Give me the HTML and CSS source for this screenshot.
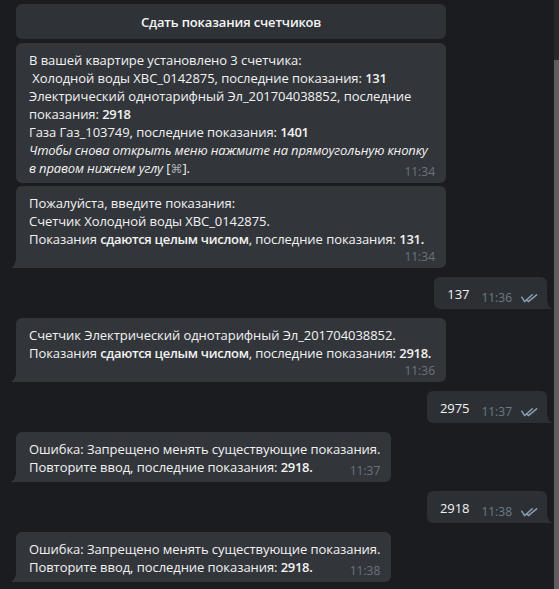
FILE: index.html
```html
<!DOCTYPE html>
<html lang="ru">
<head>
<meta charset="utf-8">
<title>Chat</title>
<link rel="stylesheet" href="styles.css">
</head>
<body>
<div class="chat">
  <div class="group">
    <div class="kb-btn">Сдать показания счетчиков</div>
    <div class="bubble in wide">В вашей квартире установлено 3 счетчика:<br>&nbsp;Холодной воды ХВС_0142875, последние показания: <b>131</b><br>Электрический однотарифный Эл_201704038852, последние показания: <b>2918</b><br>Газа Газ_103749, последние показания: <b>1401</b><br><i>Чтобы снова открыть меню нажмите на прямоугольную кнопку<br>в правом нижнем углу</i> [<span class="cmd">⌘</span>].<span class="meta">11:34</span></div>
    <div class="bubble in wide tail-in">Пожалуйста, введите показания:<br>Счетчик Холодной воды ХВС_0142875.<br>Показания <b>сдаются целым числом</b>, последние показания: <b>131.</b><div class="foot">11:34</div></div>
  </div>
  <div class="group">
    <div class="bubble out tail-out">137<span class="meta out-meta">11:36<svg class="checks" width="18" height="9" viewBox="0 0 18 9"><path d="M0.8 3.2 L3.6 7.6 L11.2 0.8 M6 6 L7.4 7.6 L15.6 0.8" /></svg></span></div>
  </div>
  <div class="group">
    <div class="bubble in wide tail-in">Счетчик Электрический однотарифный Эл_201704038852.<br>Показания <b>сдаются целым числом</b>, последние показания: <b>2918.</b><div class="foot">11:36</div></div>
  </div>
  <div class="group">
    <div class="bubble out tail-out">2975<span class="meta out-meta">11:37<svg class="checks" width="18" height="9" viewBox="0 0 18 9"><path d="M0.8 3.2 L3.6 7.6 L11.2 0.8 M6 6 L7.4 7.6 L15.6 0.8" /></svg></span></div>
  </div>
  <div class="group">
    <div class="bubble in tail-in">Ошибка: Запрещено менять существующие показания.<br>Повторите ввод, последние показания: <b>2918.</b><span class="meta">11:37</span></div>
  </div>
  <div class="group">
    <div class="bubble out tail-out">2918<span class="meta out-meta">11:38<svg class="checks" width="18" height="9" viewBox="0 0 18 9"><path d="M0.8 3.2 L3.6 7.6 L11.2 0.8 M6 6 L7.4 7.6 L15.6 0.8" /></svg></span></div>
  </div>
  <div class="group">
    <div class="bubble in tail-in">Ошибка: Запрещено менять существующие показания.<br>Повторите ввод, последние показания: <b>2918.</b><span class="meta">11:38</span></div>
  </div>
</div>
<div class="scrollbar"><div class="thumb"></div></div>
</body>
</html>
```
FILE: styles.css
```css
html, body {
  margin: 0;
  height: 100%;
}
body {
  background: #1b1c20;
  font-family: "Open Sans", "DejaVu Sans", sans-serif;
  font-size: 13px;
  color: #f2f2f2;
  display: flex;
  overflow: hidden;
}
.chat {
  flex: 1;
  display: flex;
  flex-direction: column;
  gap: 9px;
  padding: 4px 7px 0 16px;
  min-width: 0;
}
.group {
  display: flex;
  flex-direction: column;
  gap: 3px;
}
.kb-btn {
  width: 430px;
  height: 35px;
  box-sizing: border-box;
  background: #2f3237;
  border-radius: 6px;
  font-family: "Open Sans SemiBold", "Open Sans Semibold", "Open Sans", sans-serif;
  font-weight: 600;
  letter-spacing: -0.15px;
  display: flex;
  align-items: center;
  justify-content: center;
  margin-bottom: 1px;
  color: #f5f5f5;
}
.bubble {
  position: relative;
  display: flow-root;
  box-sizing: border-box;
  max-width: 430px;
  background: #32363b;
  border-radius: 6px;
  padding: 8px 11px 4px 13px;
  line-height: 18px;
  letter-spacing: -0.06px;
}
.bubble b {
  font-family: "Open Sans SemiBold", "Open Sans Semibold", "Open Sans", sans-serif;
  font-weight: 600;
  letter-spacing: -0.3px;
}
.bubble i {
  letter-spacing: -0.15px;
}
.in {
  align-self: flex-start;
}
.wide {
  width: 430px;
}
.out {
  align-self: flex-end;
  background: #2c3034;
  padding-right: 8px;
}
.tail-in {
  border-bottom-left-radius: 0;
}
.tail-in::before {
  content: "";
  position: absolute;
  left: -6px;
  bottom: 0;
  width: 6px;
  height: 10px;
  background: radial-gradient(6px 10px at 0 0, transparent 96%, #32363b 100%);
}
.tail-out {
  border-bottom-right-radius: 0;
}
.tail-out::after {
  content: "";
  position: absolute;
  right: -6px;
  bottom: 0;
  width: 6px;
  height: 10px;
  background: radial-gradient(6px 10px at 100% 0, transparent 96%, #2c3034 100%);
}
.meta {
  float: right;
  margin: 5px 0 0 12px;
  line-height: 15px;
  font-size: 12px;
  letter-spacing: 0;
  color: #6b737c;
  display: flex;
  align-items: center;
}
.out-meta {
  color: #6d7b88;
  gap: 9px;
}
.foot {
  text-align: right;
  line-height: 15px;
  margin-top: 1px;
  font-size: 12px;
  letter-spacing: 0;
  color: #6b737c;
}
.checks {
  fill: none;
  stroke: #8a9cae;
  stroke-width: 1.5;
  stroke-linecap: round;
  stroke-linejoin: round;
  margin-top: 1px;
}
.cmd {
  font-family: "DejaVu Sans", sans-serif;
  color: #a9adb2;
  font-size: 12px;
}
.scrollbar {
  width: 5px;
  display: flex;
  flex-direction: column;
  background: #26282c;
}
.thumb {
  margin-top: 60px;
  flex: 1;
  background: #5b5d60;
}
```
